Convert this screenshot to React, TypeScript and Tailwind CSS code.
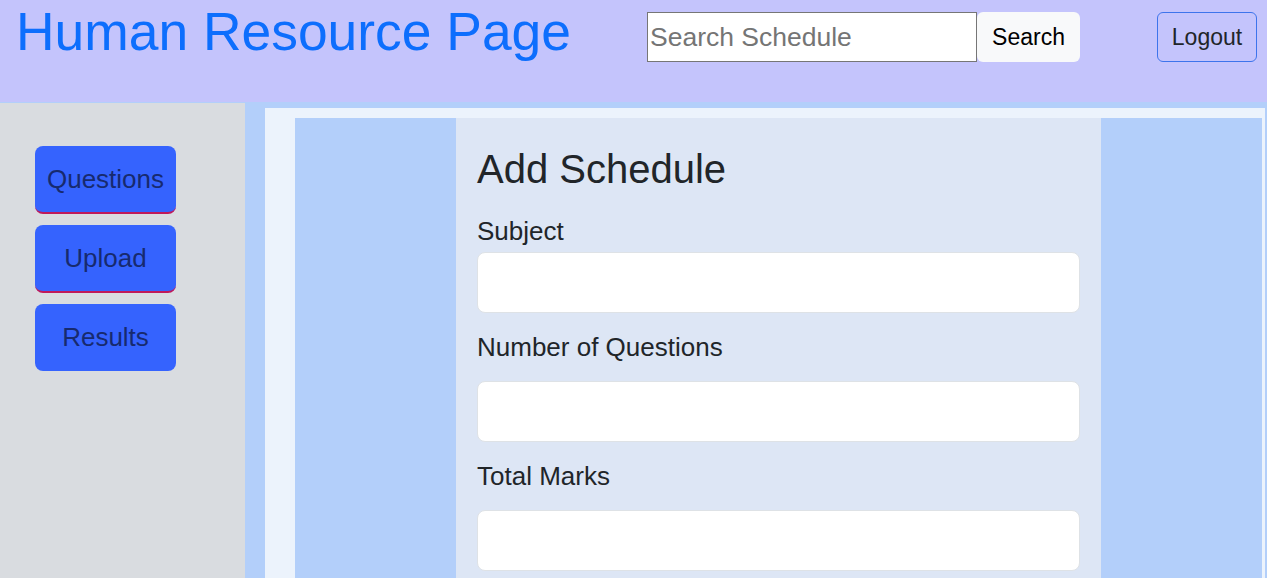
import React from "react";

export default function App() {
  const font = { fontFamily: '"Liberation Sans", Arial, sans-serif' };
  return (
    <div
      className="w-[1267px] h-[578px] overflow-hidden flex flex-col bg-[#b3cffa]"
      style={font}
    >
      {/* Header */}
      <header className="h-[102px] shrink-0 bg-[#c4c4fc] flex items-start">
        <h1 className="ml-[16px] mt-[2px] w-[554px] text-[53.4px] leading-[60px] text-[#0d6efd] font-normal whitespace-nowrap">
          Human Resource Page
        </h1>
        <div className="ml-[77px] mt-[12px] flex">
          <input
            type="text"
            placeholder="Search Schedule"
            className="w-[330px] h-[50px] border border-[#767676] bg-white pl-[2px] text-[26.5px] text-black placeholder:text-[#757575] outline-none"
          />
          <button className="w-[103px] h-[50px] rounded-[6px] bg-[#f8f9fa] text-[23px] text-black">
            Search
          </button>
        </div>
        <button className="ml-[77px] mt-[12px] w-[100px] h-[50px] rounded-[6px] border border-[#3d74ec] text-[23px] text-[#212529]">
          Logout
        </button>
      </header>

      {/* Body */}
      <div className="flex flex-1 min-h-0">
        <aside className="w-[245px] shrink-0 bg-[#d9dce0] mt-[1px] pt-[43px] pl-[35px] flex flex-col gap-[11px]">
          <button className="w-[141px] h-[68px] rounded-[8px] bg-[#3563fe] border-b-[2px] border-[#c0195a] text-[26px] text-[#172a6e]">
            Questions
          </button>
          <button className="w-[141px] h-[68px] rounded-[8px] bg-[#3563fe] border-b-[2px] border-[#c0195a] text-[26px] text-[#172a6e]">
            Upload
          </button>
          <button className="w-[141px] h-[67px] rounded-[8px] bg-[#3563fe] text-[26px] text-[#172a6e]">
            Results
          </button>
        </aside>

        <main className="flex-1 min-w-0 pl-[20px] pt-[6px] pr-[2px] flex">
          <div className="flex-1 bg-[#ecf3fc] pl-[30px] pt-[10px] pr-[3px] flex">
            <div className="flex-1 bg-[#b3cffa] flex justify-center">
              <div className="w-[645px] bg-[#dde6f5] px-[21px] pt-[27px]">
                <h2 className="text-[40px] leading-[48px] text-[#212529] font-normal">
                  Add Schedule
                </h2>
                <label className="block mt-[23px] text-[26px] leading-[30px] text-[#212529]">
                  Subject
                </label>
                <input
                  type="text"
                  className="block mt-[6px] w-full h-[61px] rounded-[8px] border border-[#dee2e6] bg-white outline-none"
                />
                <label className="block mt-[19px] text-[26px] leading-[30px] text-[#212529]">
                  Number of Questions
                </label>
                <input
                  type="text"
                  className="block mt-[19px] w-full h-[61px] rounded-[8px] border border-[#dee2e6] bg-white outline-none"
                />
                <label className="block mt-[19px] text-[26px] leading-[30px] text-[#212529]">
                  Total Marks
                </label>
                <input
                  type="text"
                  className="block mt-[19px] w-full h-[61px] rounded-[8px] border border-[#dee2e6] bg-white outline-none"
                />
              </div>
            </div>
          </div>
        </main>
      </div>
    </div>
  );
}
